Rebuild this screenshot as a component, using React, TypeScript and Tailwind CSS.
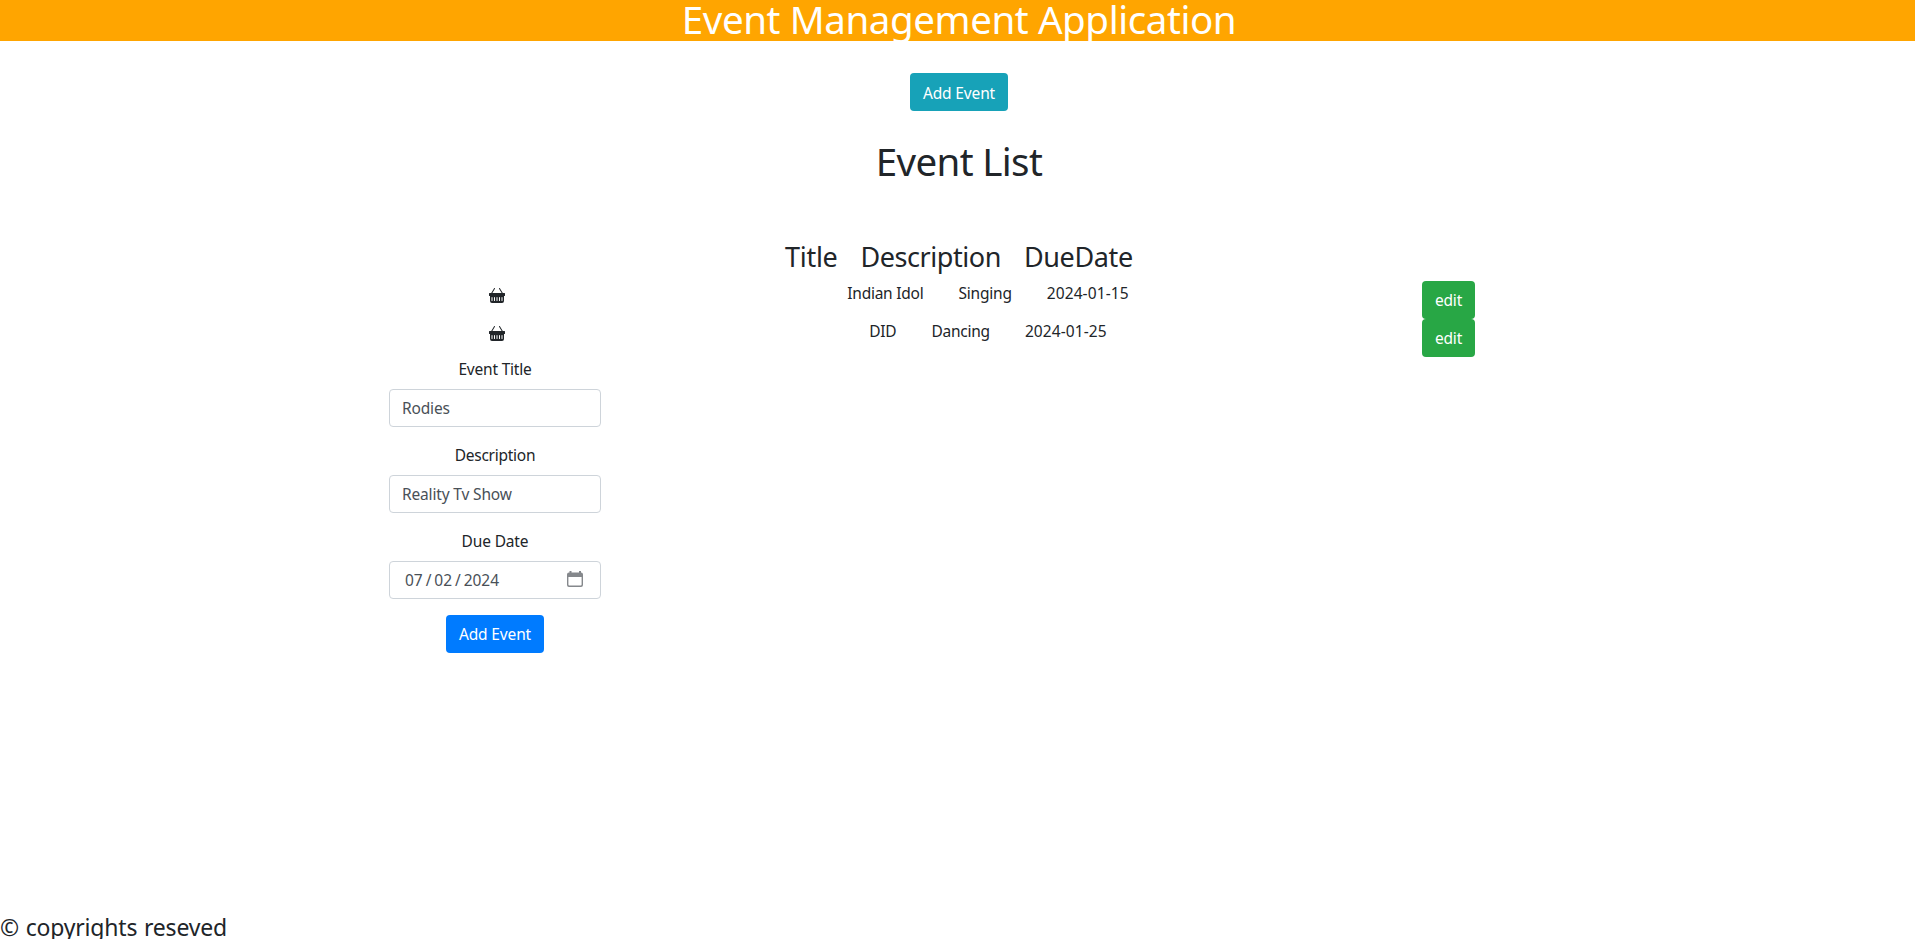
import React from "react";
import { BsBasketFill } from "react-icons/bs";

function CalendarIcon() {
  return (
    <svg width="16" height="16" viewBox="0 0 16 16" fill="#85888c">
      <path d="M2.500 0h2v2h-2zM12 0h2v2h-2z" />
      <path
        fillRule="evenodd"
        d="M2 1.500h12a2 2 0 0 1 2 2V14a2 2 0 0 1-2 2H2a2 2 0 0 1-2-2V3.500a2 2 0 0 1 2-2zM1.400 6v7.600a.9.9 0 0 0 .9.9h11.400a.9.9 0 0 0 .9-.9V6z"
      />
    </svg>
  );
}

function Cell({ children, className }: { children: React.ReactNode; className: string }) {
  return <span className={`flex-none whitespace-nowrap ${className}`}>{children}</span>;
}

function EventRow({ children }: { children: React.ReactNode }) {
  return (
    <div className="grid h-[38px] grid-cols-[212px_774px_147px]">
      <div className="flex justify-center pt-1.5 pl-1">
        <BsBasketFill size={16} />
      </div>
      <div className="flex justify-center gap-[35px]">{children}</div>
      <div className="flex justify-center">
        <button className="h-[38px] w-[53px] rounded bg-[#28a745] tracking-[-0.2px] text-white">edit</button>
      </div>
    </div>
  );
}

function Field({ label, className, children }: { label: string; className: string; children: React.ReactNode }) {
  return (
    <div className="mb-4 flex flex-col">
      <label className={`mb-2 text-center ${className}`}>{label}</label>
      <div className="flex h-[38px] items-center rounded border border-[#ced4da] px-3 text-[#495057]">{children}</div>
    </div>
  );
}

export default function App() {
  return (
    <div className="flex h-screen flex-col overflow-hidden bg-white font-['Noto_Sans','Open_Sans',sans-serif] text-[15.5px] leading-6 text-[#212529]">
      <header className="h-[41px] flex-none bg-[#ffa500] pl-[3px] text-center text-[38.5px] leading-[38px] tracking-[-0.41px] text-white">
        Event Management Application
      </header>

      <div className="mt-8 flex flex-none justify-center pl-[3px]">
        <button className="h-[38px] w-[98px] rounded bg-[#17a2b8] pt-0.5 tracking-[-0.15px] text-white">Add Event</button>
      </div>

      <h1 className="mt-[26px] flex-none pl-[3px] text-center text-[38.5px] leading-[48px] tracking-[-0.65px]">Event List</h1>

      <div className="mt-[55px] flex flex-none justify-center gap-[23px] pl-[3px] text-[27px] leading-[34px]">
        <Cell className="tracking-[-0.3px]">Title</Cell>
        <Cell className="tracking-[-0.45px]">Description</Cell>
        <Cell className="tracking-[-0.35px]">DueDate</Cell>
      </div>

      <main className="mt-[7px] ml-[389px] flex flex-1 flex-col">
        <EventRow>
          <Cell className="tracking-[-0.25px]">Indian Idol</Cell>
          <Cell className="tracking-[-0.2px]">Singing</Cell>
          <Cell className="tracking-[0.1px]">2024-01-15</Cell>
        </EventRow>
        <EventRow>
          <Cell className="tracking-[-0.2px]">DID</Cell>
          <Cell className="tracking-[-0.25px]">Dancing</Cell>
          <Cell className="tracking-[0.1px]">2024-01-25</Cell>
        </EventRow>

        <form className="flex w-[212px] flex-col">
          <Field label="Event Title" className="tracking-[-0.2px]">
            <span className="tracking-[-0.15px]">Rodies</span>
          </Field>
          <Field label="Description" className="tracking-[-0.25px]">
            <span className="tracking-[-0.16px]">Reality Tv Show</span>
          </Field>
          <Field label="Due Date" className="tracking-[-0.15px]">
            <div className="flex w-full items-center justify-between pr-[5px] pl-[3px]">
              <div className="flex gap-[3px] tracking-[-0.05px]">
                <span>07</span>
                <span>/</span>
                <span>02</span>
                <span>/</span>
                <span>2024</span>
              </div>
              <div className="pb-0.5">
                <CalendarIcon />
              </div>
            </div>
          </Field>
          <button type="button" className="h-[38px] w-[98px] self-center rounded bg-[#007bff] tracking-[-0.15px] text-white">
            Add Event
          </button>
        </form>
      </main>

      <footer className="h-[26px] flex-none text-[23px] leading-[29px] tracking-[-0.2px] [word-spacing:1px]">© copyrights reseved</footer>
    </div>
  );
}
